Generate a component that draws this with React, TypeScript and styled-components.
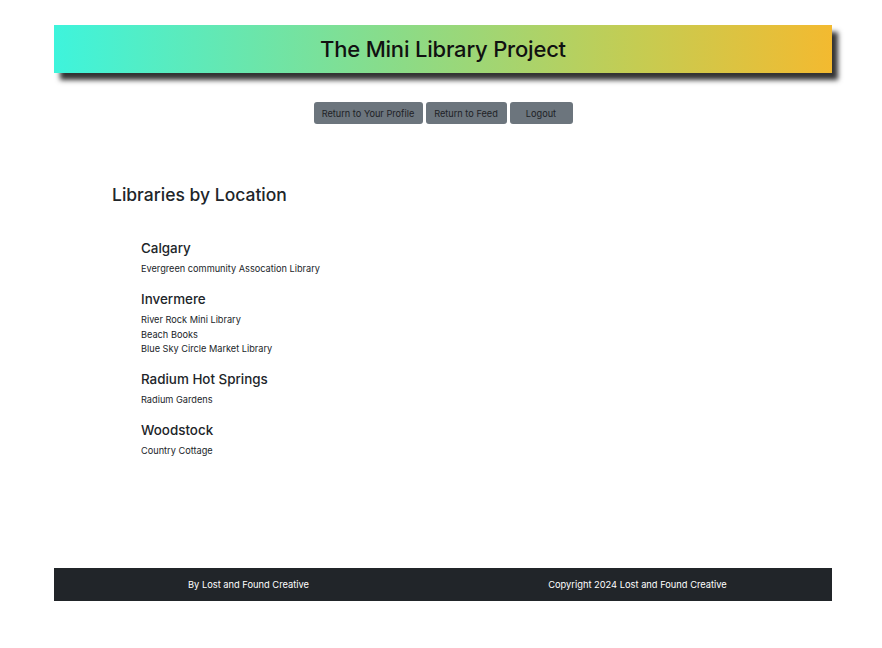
import React from "react";
import styled, { createGlobalStyle } from "styled-components";

const Global = createGlobalStyle`
  html, body { margin: 0; padding: 0; background: #fff; }
  body {
    font-family: Inter, "Noto Sans", "Liberation Sans", sans-serif;
    color: #212529;
  }
`;

const Page = styled.div`
  width: 778px;
  margin: 0 0 0 54px;
  padding-top: 25px;
`;

const Header = styled.header`
  height: 48px;
  display: flex;
  align-items: center;
  justify-content: center;
  background: linear-gradient(90deg, #3ef4dc 0%, #8cdb86 45%, #c5cc52 75%, #f3ba30 100%);
  box-shadow: 6px 7px 5px rgba(0, 0, 0, 0.8);
`;

const Title = styled.h1`
  margin: 0;
  font-size: 22px;
  font-weight: 500;
  letter-spacing: -0.2px;
  color: #111;
`;

const Nav = styled.nav`
  display: flex;
  justify-content: center;
  gap: 3px;
  margin-top: 29px;
`;

const Button = styled.button<{ $w: number }>`
  width: ${(p) => p.$w}px;
  height: 22px;
  padding: 0;
  border: none;
  border-radius: 3px;
  background: #6c757d;
  color: #1e2226;
  font-family: inherit;
  font-size: 9.2px;
  cursor: pointer;
`;

const Main = styled.main`
  padding: 59px 0 0 58px;
  height: 444px;
  box-sizing: border-box;
`;

const SectionTitle = styled.h2`
  margin: 0 0 34px;
  font-size: 17.5px;
  font-weight: 500;
  line-height: 23px;
`;

const Groups = styled.div`
  display: flex;
  flex-direction: column;
  gap: 14.5px;
  padding-left: 29px;
`;

const Group = styled.section`
  display: flex;
  flex-direction: column;
`;

const City = styled.h3`
  margin: 0 0 5px;
  font-size: 13.4px;
  font-weight: 500;
  line-height: 17px;
`;

const Item = styled.div`
  font-size: 9.2px;
  line-height: 14.5px;
`;

const Footer = styled.footer`
  height: 33px;
  background: #212529;
  display: grid;
  grid-template-columns: 1fr 1fr;
  align-items: center;
  color: #fff;
  font-size: 9.3px;
  text-align: center;
`;

const data: { city: string; items: string[] }[] = [
  { city: "Calgary", items: ["Evergreen community Assocation Library"] },
  {
    city: "Invermere",
    items: ["River Rock Mini Library", "Beach Books", "Blue Sky Circle Market Library"],
  },
  { city: "Radium Hot Springs", items: ["Radium Gardens"] },
  { city: "Woodstock", items: ["Country Cottage"] },
];

export default function App() {
  return (
    <>
      <Global />
      <Page>
        <Header>
          <Title>The Mini Library Project</Title>
        </Header>
        <Nav>
          <Button $w={109}>Return to Your Profile</Button>
          <Button $w={81}>Return to Feed</Button>
          <Button $w={63}>Logout</Button>
        </Nav>
        <Main>
          <SectionTitle>Libraries by Location</SectionTitle>
          <Groups>
            {data.map((g) => (
              <Group key={g.city}>
                <City>{g.city}</City>
                {g.items.map((i) => (
                  <Item key={i}>{i}</Item>
                ))}
              </Group>
            ))}
          </Groups>
        </Main>
        <Footer>
          <div>By Lost and Found Creative</div>
          <div>Copyright 2024 Lost and Found Creative</div>
        </Footer>
      </Page>
    </>
  );
}
